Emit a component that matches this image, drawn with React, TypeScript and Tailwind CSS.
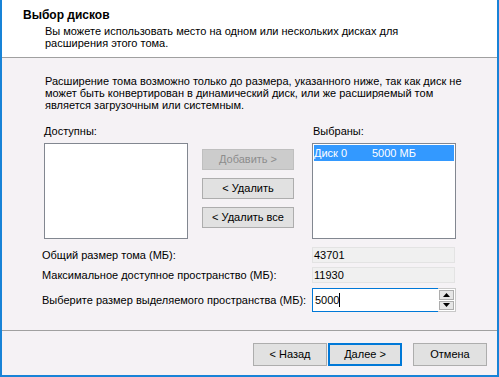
import React from "react";

function Btn({ children, w = "w-[92px]", h = "h-[21px]", disabled = false, primary = false }: { children: React.ReactNode; w?: string; h?: string; disabled?: boolean; primary?: boolean }) {
  const base = "flex items-center justify-center leading-[13px] whitespace-nowrap " + w + " " + h;
  if (disabled) return <div className={base + " bg-[#cccccc] border border-[#bfbfbf] text-[#8d8d8d]"}>{children}</div>;
  if (primary) return <div className={base + " bg-[#e1e1e1] border-2 border-[#0078d7]"}>{children}</div>;
  return <div className={base + " bg-[#e1e1e1] border border-[#adadad]"}>{children}</div>;
}

export default function App() {
  return (
    <div className="w-[499px] h-[377px] border-x-2 border-b-2 border-[#1883d7] bg-[#f5f2f5] flex flex-col font-['Liberation_Sans',Arial,sans-serif] text-[11px] text-black overflow-hidden">
      {/* Header */}
      <div className="h-[58px] shrink-0 bg-white border-b border-[#a0a0a0] pl-[21px] pt-[9px]">
        <div className="font-bold leading-[13px] text-[12px]">Выбор дисков</div>
        <div className="ml-[22px] mt-[3px] leading-[12px] whitespace-nowrap">
          Вы можете использовать место на одном или нескольких дисках для
          <br />
          расширения этого тома.
        </div>
      </div>

      {/* Body */}
      <div className="flex-1 flex flex-col">
        <div className="ml-[43px] mt-[17px] leading-[12px] whitespace-nowrap">
          Расширение тома возможно только до размера, указанного ниже, так как диск не
          <br />
          может быть конвертирован в динамический диск, или же расширяемый том
          <br />
          является загрузочным или системным.
        </div>

        <div className="flex items-start mt-[14px]">
          <div className="ml-[42px] w-[144px] flex flex-col">
            <div className="leading-[12px] h-[12px]">Доступны:</div>
            <div className="mt-[6px] h-[96px] bg-white border border-[#828790]" />
          </div>
          <div className="ml-[14px] w-[92px] pt-[24px] flex flex-col gap-[8px]">
            <Btn disabled>Добавить &gt;</Btn>
            <Btn>&lt; Удалить</Btn>
            <Btn>&lt; Удалить все</Btn>
          </div>
          <div className="ml-[18px] w-[144px] flex flex-col">
            <div className="leading-[12px] h-[12px] pl-[1px]">Выбраны:</div>
            <div className="mt-[6px] h-[96px] bg-white border border-[#828790] p-[1px]">
              <div className="h-[16px] bg-[#3399ff] text-white leading-[16px] flex whitespace-nowrap">
                <span className="w-[58px]">Диск 0</span>
                <span>5000 МБ</span>
              </div>
            </div>
          </div>
        </div>

        <div className="mt-[8px] flex items-center h-[16px]">
          <div className="ml-[40px] w-[270px] leading-[13px]">Общий размер тома (МБ):</div>
          <div className="w-[143px] h-[16px] bg-[#f0f0f0] border border-[#e3e3e3] leading-[14px] pl-[1px]">43701</div>
        </div>
        <div className="mt-[4px] flex items-center h-[16px]">
          <div className="ml-[40px] w-[270px] leading-[13px]">Максимальное доступное пространство (МБ):</div>
          <div className="w-[143px] h-[16px] bg-[#f0f0f0] border border-[#e3e3e3] leading-[14px] pl-[1px]">11930</div>
        </div>
        <div className="mt-[5px] flex items-center h-[24px]">
          <div className="ml-[40px] w-[270px] leading-[13px] whitespace-nowrap">Выберите размер выделяемого пространства (МБ):</div>
          <div className="w-[144px] h-[24px] flex">
            <div className="w-[126px] h-[24px] bg-white border border-[#0078d7] border-r-0 flex items-center pl-[2px]">
              <span className="leading-[13px]">5000</span>
              <span className="w-[1px] h-[14px] bg-black" />
            </div>
            <div className="w-[18px] h-[24px] bg-white flex flex-col border-t border-b border-r border-[#c8c8c8] p-[1px] gap-[1px]">
              <div className="flex-1 bg-[#e6e6e6] border border-[#adadad] flex items-center justify-center">
                <svg width="7" height="4" viewBox="0 0 7 4"><path d="M3.5 0 L7 4 L0 4 Z" fill="#000" /></svg>
              </div>
              <div className="flex-1 bg-[#e6e6e6] border border-[#adadad] flex items-center justify-center">
                <svg width="7" height="4" viewBox="0 0 7 4"><path d="M0 0 L7 0 L3.5 4 Z" fill="#000" /></svg>
              </div>
            </div>
          </div>
        </div>
      </div>

      {/* Footer */}
      <div className="h-[45px] shrink-0 border-t border-[#a0a0a0] flex justify-end items-start pt-[12px] pr-[10px]">
        <Btn w="w-[74px]" h="h-[23px]">&lt; Назад</Btn>
        <div className="ml-[1px]">
          <Btn w="w-[74px]" h="h-[23px]" primary>Далее &gt;</Btn>
        </div>
        <div className="ml-[11px]">
          <Btn w="w-[74px]" h="h-[23px]">Отмена</Btn>
        </div>
      </div>
    </div>
  );
}
